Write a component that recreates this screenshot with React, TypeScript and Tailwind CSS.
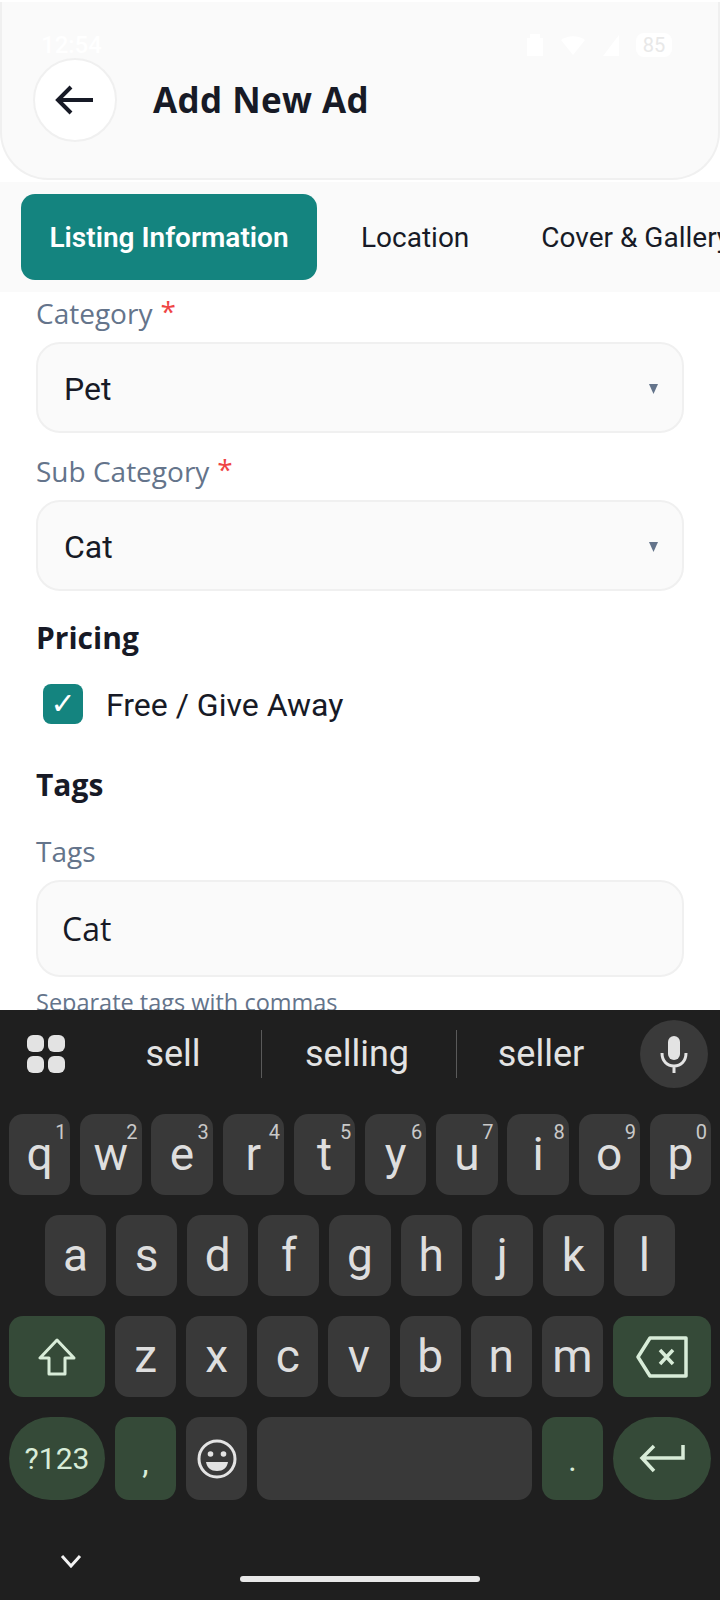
import { ReactNode } from 'react'

function Row({ keys }: { keys: string[] }) {
  return <>{keys.map((k) => <Key key={k} label={k} />)}</>
}

function Key({ label, digit }: { label: string; digit?: string }) {
  return (
    <div className="relative flex-1 h-[81px] rounded-[14px] bg-[#393939] flex items-center justify-center text-[46px] text-[#dedede]">
      <span className="leading-none -mt-[2px]">{label}</span>
      {digit && <span className="absolute top-[6px] right-[4px] text-[20px] leading-[24px] text-[#c9c9c9]">{digit}</span>}
    </div>
  )
}

function GreenKey({ children, className = '' }: { children: ReactNode; className?: string }) {
  return (
    <div className={`bg-[#354a38] flex justify-center text-[#d8ecd8] ${className}`}>
      {children}
    </div>
  )
}

function Field({ label, required, children }: { label: string; required?: boolean; children: ReactNode }) {
  return (
    <div>
      <div className="h-[34px] pb-[4px] flex items-center font-['Open_Sans',sans-serif] text-[28px] text-[#64748b] leading-none">
        {label}
        {required && <span className="text-[#ef4444] ml-[8px] -mt-[4px]">*</span>}
      </div>
      {children}
    </div>
  )
}

function SelectBox({ value }: { value: string }) {
  return (
    <div className="mt-[10px] h-[91px] rounded-[24px] border-2 border-[#f0f0f0] bg-[#fafafa] flex items-center justify-between pl-[26px] pr-[24px]">
      <span className="font-['Roboto',sans-serif] text-[32px] text-[#171a26] mt-[2px]">{value}</span>
      <svg className="mt-[3px]" width="9" height="10" viewBox="0 0 9 10"><path d="M0 0h9L4.5 10z" fill="#64748b" /></svg>
    </div>
  )
}

export default function App() {
  const topRow = ['q', 'w', 'e', 'r', 't', 'y', 'u', 'i', 'o', 'p']
  const digits = ['1', '2', '3', '4', '5', '6', '7', '8', '9', '0']

  return (
    <div className="w-[720px] h-[1600px] flex flex-col overflow-hidden bg-white font-['Roboto',sans-serif]">
      {/* Header */}
      <div className="h-[182px] shrink-0 bg-white pt-[2px]">
        <div className="h-[178px] rounded-b-[48px] border-x-2 border-b-2 border-[#f0f0f0] bg-[#fafafa] pt-[32px] pl-[31px]">
          {/* status bar, white on near white in the capture */}
          <div className="h-[26px] -mt-[2px] flex items-center justify-between pl-[8px] pr-[46px] text-white text-[24px] font-medium">
            <span>12:54</span>
            <div className="flex items-center gap-[16px]">
              <svg width="18" height="26" viewBox="0 0 18 26" fill="#ffffff"><path d="M4 2h10v4h3v18H1V6h3z" /></svg>
              <svg width="26" height="20" viewBox="0 0 26 20" fill="#ffffff"><path d="M1 5c7-5 17-5 24 0L13 20z" /></svg>
              <svg width="18" height="22" viewBox="0 0 18 22" fill="#ffffff"><path d="M17 1v21H1z" /></svg>
              <span className="w-[36px] h-[24px] rounded-[8px] bg-white text-[#e8e8e8] text-[20px] font-normal leading-[24px] text-center">85</span>
            </div>
          </div>
          <div className="flex items-center gap-[36px]">
            <div className="w-[84px] h-[84px] rounded-full bg-white border-2 border-[#f0f0f0] flex items-center justify-center">
              <svg className="-ml-[2px]" width="40" height="30" viewBox="0 0 40 30" fill="none" stroke="#171a26" strokeWidth="4">
                <path d="M39 15H4M17 2L4 15l13 13" />
              </svg>
            </div>
            <h1 className="font-['Open_Sans',sans-serif] font-bold text-[35px] tracking-[0.4px] leading-none text-[#171a26] -mt-[2px]">Add New Ad</h1>
          </div>
        </div>
      </div>

      {/* Tabs */}
      <div className="h-[110px] shrink-0 bg-[#fafafa] flex items-center pl-[21px] overflow-hidden whitespace-nowrap text-[28px] text-[#171a26]">
        <div className="w-[296px] h-[86px] shrink-0 rounded-[14px] bg-[#14847f] text-white font-semibold flex items-center justify-center pt-[2px]">Listing Information</div>
        <span className="ml-[44px] pt-[2px]">Location</span>
        <span className="ml-[72px] pt-[2px]">Cover &amp; Gallery</span>
      </div>

      {/* Form, cut off by the keyboard */}
      <div className="flex-1 overflow-hidden px-[36px] pt-[6px]">
        <Field label="Category" required><SelectBox value="Pet" /></Field>
        <div className="mt-[23px]">
          <Field label="Sub Category" required><SelectBox value="Cat" /></Field>
        </div>

        <h2 className="mt-[30px] h-[34px] font-['Open_Sans',sans-serif] font-bold text-[30px] leading-[34px] text-[#171a26]">Pricing</h2>
        <div className="mt-[28px] flex items-center pl-[7px]">
          <div className="w-[40px] h-[40px] rounded-[8px] bg-[#14847f] text-white text-[30px] leading-none flex items-center justify-center font-['DejaVu_Sans',sans-serif]">✓</div>
          <span className="ml-[23px] text-[32px] leading-[40px] text-[#171a26] pt-[2px]">Free / Give Away</span>
        </div>

        <h2 className="mt-[43px] h-[34px] font-['Open_Sans',sans-serif] font-bold text-[30px] leading-[34px] text-[#171a26]">Tags</h2>
        <div className="mt-[34px]">
          <Field label="Tags">
            <div className="mt-[10px] h-[97px] rounded-[24px] border-2 border-[#f0f0f0] bg-[#fafafa] flex items-center pl-[24px] font-['Open_Sans',sans-serif] text-[32px] text-[#171a26]">Cat</div>
          </Field>
        </div>
        <p className="mt-[11px] font-['Open_Sans',sans-serif] text-[23.5px] leading-[28px] text-[#64748b]">Separate tags with commas</p>
      </div>

      {/* Keyboard */}
      <div className="h-[590px] shrink-0 bg-[#1f1f1f] flex flex-col">
        <div className="h-[88px] mb-[16px] shrink-0 flex items-center pl-[27px] pr-[12px]">
          <div className="grid grid-cols-2 gap-[4px] w-[38px] shrink-0">
            <span className="h-[17px] rounded-[6px] bg-[#e3e3e3]" />
            <span className="h-[17px] rounded-[6px] bg-[#e3e3e3]" />
            <span className="h-[17px] rounded-[6px] bg-[#e3e3e3]" />
            <span className="h-[17px] rounded-[6px] bg-[#e3e3e3]" />
          </div>
          <div className="flex-1 flex items-center text-[36px] text-[#e3e3e3] ml-[30px] mr-[28px]">
            <span className="w-[166px] text-center pr-[10px]">sell</span>
            <span className="w-[1px] h-[48px] bg-[#5a5a5a]" />
            <span className="w-[194px] text-center pr-[4px]">selling</span>
            <span className="w-[1px] h-[48px] bg-[#5a5a5a]" />
            <span className="flex-1 text-center pl-[13px]">seller</span>
          </div>
          <div className="w-[68px] h-[68px] rounded-full bg-[#3a3a3a] flex items-center justify-center shrink-0">
            <svg width="28" height="38" viewBox="0 0 28 38" fill="none">
              <rect x="8" y="1" width="12" height="24" rx="6" fill="#e3e3e3" />
              <path d="M2 18c0 8 5 13 12 13s12-5 12-13M14 31v7" stroke="#e3e3e3" strokeWidth="3" />
            </svg>
          </div>
        </div>

        <div className="flex gap-[9.8px] px-[9px] ">
          {topRow.map((k, i) => <Key key={k} label={k} digit={digits[i]} />)}
        </div>

        <div className="flex gap-[10px] px-[45px] mt-[20px]">
          <Row keys={['a', 's', 'd', 'f', 'g', 'h', 'j', 'k', 'l']} />
        </div>

        <div className="flex gap-[10px] px-[9px] mt-[20px]">
          <GreenKey className="w-[96px] h-[81px] rounded-[14px] shrink-0 items-center">
            <svg width="40" height="38" viewBox="0 0 40 38" fill="none" stroke="currentColor" strokeWidth="3" strokeLinejoin="round">
              <path d="M20 2L3 20h9v16h16V20h9z" />
            </svg>
          </GreenKey>
          <Row keys={['z', 'x', 'c', 'v', 'b', 'n', 'm']} />
          <GreenKey className="w-[98px] h-[81px] rounded-[14px] shrink-0 items-center">
            <svg width="52" height="42" viewBox="0 0 52 42" fill="none" stroke="currentColor" strokeWidth="3.5" strokeLinejoin="round">
              <path d="M14 2h36v38H14L2 21zM24 14l13 14M37 14L24 28" />
            </svg>
          </GreenKey>
        </div>

        <div className="flex gap-[10px] px-[9px] mt-[20px] h-[83px]">
          <GreenKey className="w-[96px] rounded-full shrink-0 text-[30px] items-center">?123</GreenKey>
          <GreenKey className="w-[61px] rounded-[14px] shrink-0 text-[32px] items-end leading-none pb-[22px]">,</GreenKey>
          <div className="w-[61px] rounded-[14px] shrink-0 bg-[#393939] flex items-center justify-center">
            <svg width="40" height="40" viewBox="0 0 40 40" fill="none">
              <circle cx="20" cy="20" r="18" stroke="#e3e3e3" strokeWidth="3" />
              <circle cx="13.5" cy="15" r="2.8" fill="#e3e3e3" />
              <circle cx="26.5" cy="15" r="2.8" fill="#e3e3e3" />
              <path d="M9 23h22c-1 6-5 9-11 9s-10-3-11-9z" fill="#e3e3e3" />
            </svg>
          </div>
          <div className="flex-1 rounded-[14px] bg-[#393939]" />
          <GreenKey className="w-[61px] rounded-[14px] shrink-0 text-[32px] items-end leading-none pb-[24px]">.</GreenKey>
          <GreenKey className="w-[98px] rounded-full shrink-0 items-center">
            <svg width="46" height="30" viewBox="0 0 46 30" fill="none" stroke="currentColor" strokeWidth="3.5">
              <path d="M44 1v13H3M15 2L3 14l12 13" />
            </svg>
          </GreenKey>
        </div>

        <div className="pl-[60px] mt-[54px] h-[14px]">
          <svg width="22" height="14" viewBox="0 0 22 14" fill="none" stroke="#f2f2f2" strokeWidth="3">
            <path d="M2 2l9 10 9-10" />
          </svg>
        </div>
        <div className="mx-auto mt-[8px] w-[240px] h-[6px] rounded-full bg-[#e8e8e8]" />
      </div>
    </div>
  )
}
